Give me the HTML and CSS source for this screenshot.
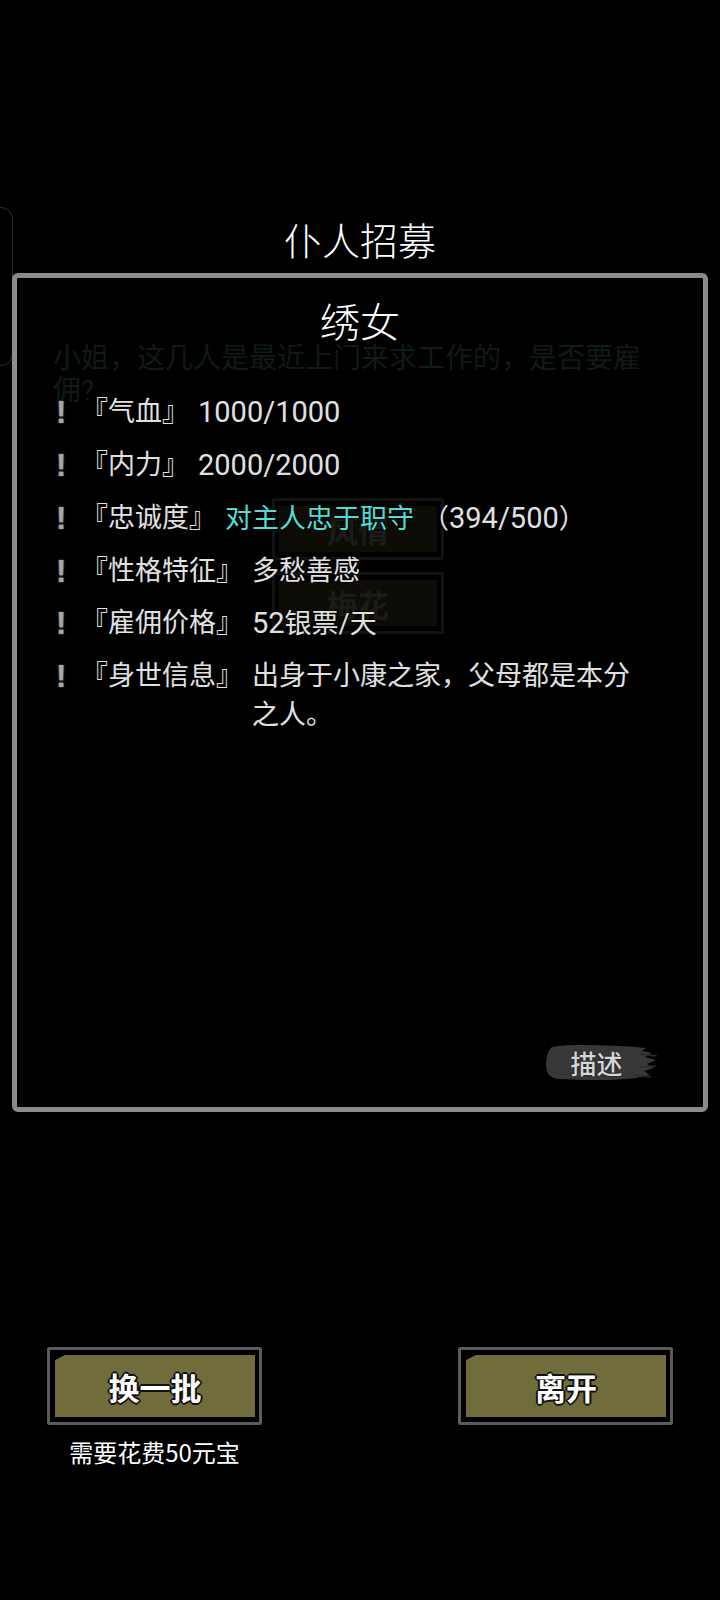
FILE: index.html
```html
<!DOCTYPE html>
<html lang="zh-CN">
<head>
    <meta charset="UTF-8">
    <meta name="viewport" content="width=device-width, initial-scale=1.0, user-scalable=no">
    <title>仆人招募</title>
    <link rel="stylesheet" href="styles.css">
</head>
<body>
    <div class="side-tab"></div>

    <main class="screen">
        <h1 class="title">仆人招募</h1>

        <section class="panel">
            <div class="ghost">
                <p class="ghost-text">小姐，这几人是最近上门来求工作的，是否要雇佣?</p>
                <div class="ghost-btn"><span class="ghost-face">风情</span></div>
                <div class="ghost-btn"><span class="ghost-face">梅花</span></div>
            </div>

            <h2 class="name">绣女</h2>

            <ul class="stats">
                <li class="stat"><span class="bang">!</span><span class="label">『气血』</span><span class="value"><span class="num">1000/1000</span></span></li>
                <li class="stat"><span class="bang">!</span><span class="label">『内力』</span><span class="value"><span class="num">2000/2000</span></span></li>
                <li class="stat"><span class="bang">!</span><span class="label">『忠诚度』</span><span class="value"><span class="loyal">对主人忠于职守</span><span class="paren">（<span class="num">394/500</span>）</span></span></li>
                <li class="stat"><span class="bang">!</span><span class="label">『性格特征』</span><span class="value">多愁善感</span></li>
                <li class="stat"><span class="bang">!</span><span class="label">『雇佣价格』</span><span class="value"><span class="num">52</span>银票/天</span></li>
                <li class="stat"><span class="bang">!</span><span class="label">『身世信息』</span><span class="value">出身于小康之家，父母都是本分之人。</span></li>
            </ul>

            <button class="desc-btn">
                <svg class="brush" viewBox="0 0 115 41" width="115" height="41">
                    <path d="M9 5 C22 2 58 3 92 5 L103 6 L99 9 L109 11 L102 15 L113 18 L104 22 L111 26 L101 29 L107 33 L93 36 C70 39 40 38 15 37 C7 36 3 31 3 23 C3 15 5 8 9 5 Z" fill="#383838"/>
                    <path d="M96 12 L114 14 M98 25 L113 24 M90 33 L108 35" stroke="#2c2c2c" stroke-width="1.5"/>
                </svg>
                <span class="desc-text">描述</span>
            </button>
        </section>

        <div class="actions">
            <div class="action">
                <button class="btn"><span class="btn-face">换一批</span></button>
                <p class="cost">需要花费50元宝</p>
            </div>
            <div class="action">
                <button class="btn"><span class="btn-face">离开</span></button>
            </div>
        </div>
    </main>
</body>
</html>
```

FILE: styles.css
```css
body {
    margin: 0;
    background-color: #000;
    color: #e0e0e0;
    font-family: "Roboto", "Noto Sans CJK SC", sans-serif;
    overflow-x: hidden;
}

.side-tab {
    position: absolute;
    left: -20px;
    top: 207px;
    width: 31px;
    height: 157px;
    border: 1.5px solid #1d3a20;
    border-radius: 12px;
}

.screen { padding-top: 219px; }

.title {
    margin: 0;
    text-align: center;
    font-size: 38px;
    line-height: 46px;
    font-weight: 300;
    color: #fff;
}

.panel {
    position: relative;
    box-sizing: border-box;
    height: 839px;
    margin: 8px 12px 0;
    padding-top: 22px;
    border: 5px solid #8b8b8b;
    border-radius: 6px;
    display: flex;
    flex-direction: column;
}

/* dim layer left over from the screen underneath */
.ghost {
    position: absolute;
    left: 36px;
    top: 65px;
    width: 600px;
}
.ghost-text {
    margin: 0;
    font-size: 28px;
    line-height: 32px;
    color: #0f1a1a;
}
.ghost-btn {
    box-sizing: border-box;
    width: 172px;
    height: 62px;
    margin: 0 0 12px 219px;
    padding: 5px 4px;
    border: 3px solid #121212;
    border-radius: 2px;
}
.ghost-btn:first-of-type { margin-top: 91px; }
.ghost-face {
    display: flex;
    align-items: center;
    justify-content: center;
    height: 100%;
    background: #0d0c07;
    color: #1b1b17;
    font-family: "Noto Sans CJK SC", sans-serif;
    font-size: 31px;
    font-weight: 700;
}

.name {
    position: relative;
    margin: 0;
    text-align: center;
    font-size: 40px;
    line-height: 48px;
    font-weight: 300;
    color: #fff;
}

.stats {
    position: relative;
    list-style: none;
    margin: 45px 0 0;
    padding: 0 58px 0 39px;
}
.stat {
    display: flex;
    margin-bottom: 13px;
    font-size: 27px;
    line-height: 39px;
    text-shadow: 0 0 2px #000, 0 0 2px #000;
}
.bang {
    flex: none;
    width: 25px;
    font-family: "Liberation Sans", sans-serif;
    font-weight: 700;
    font-size: 31px;
    color: #a6a6a6;
    text-shadow: 0 0 2px #666, 0 0 1px #555;
}
.label { flex: none; white-space: nowrap; margin-right: 9px; }
.value { flex: 1; }
.num { font-size: 29px; }
.loyal { color: #52dcd6; }
.paren { margin-left: 8px; }

.desc-btn {
    position: relative;
    margin: auto 45px 24px 0;
    align-self: flex-end;
    width: 115px;
    height: 41px;
    padding: 0;
    border: none;
    background: none;
    cursor: pointer;
}
.brush { position: absolute; left: 0; top: 0; }
.desc-text {
    position: relative;
    display: block;
    padding-right: 8px;
    font-family: "Noto Sans CJK SC", serif;
    font-size: 26px;
    font-weight: 500;
    line-height: 41px;
    color: #d6d6d6;
    text-shadow: 0 0 2px #111;
}

.actions {
    display: flex;
    justify-content: space-between;
    padding: 0 47px;
    margin-top: 235px;
}
.action { width: 215px; }

.btn {
    box-sizing: border-box;
    display: block;
    width: 215px;
    height: 78px;
    padding: 5px 4px 5px 5px;
    border: 3px solid #5b5b5b;
    border-radius: 2px;
    background: #000;
    cursor: pointer;
}
.btn-face {
    display: flex;
    align-items: center;
    justify-content: center;
    height: 100%;
    background: #716c3b;
    clip-path: polygon(10px 0, 100% 0, 100% 100%, 0 100%, 0 5px);
    font-family: "Noto Sans CJK SC", sans-serif;
    font-size: 31px;
    font-weight: 700;
    color: #fff;
    text-shadow: 2px 0 0 #111, -2px 0 0 #111, 0 2px 0 #111, 0 -2px 0 #111,
                 1px 1px 0 #111, -1px -1px 0 #111, 1px -1px 0 #111, -1px 1px 0 #111;
}

.cost {
    margin: 12px 0 0;
    text-align: center;
    font-family: "Noto Sans CJK SC", sans-serif;
    font-size: 24px;
    line-height: 30px;
    color: #fff;
}
```
